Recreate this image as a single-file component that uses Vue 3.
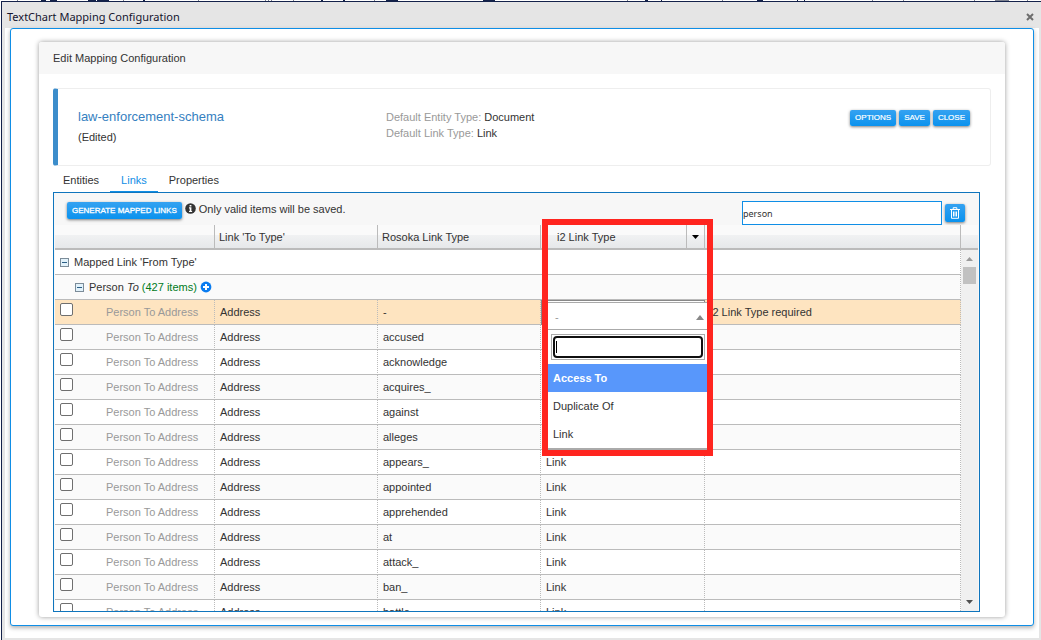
<script setup>
import { ref } from 'vue'

const filter = ref('person')
const search = ref('')
const activeTab = ref('Links')
const tabs = ['Entities', 'Links', 'Properties']
const actions = ['Options', 'Save', 'Close']
const choices = ['Access To', 'Duplicate Of', 'Link']
const rows = [
  { type: '-', link: '', note: 'i2 Link Type required' },
  { type: 'accused', link: 'Link' },
  { type: 'acknowledge', link: 'Link' },
  { type: 'acquires_', link: 'Link' },
  { type: 'against', link: 'Link' },
  { type: 'alleges', link: 'Link' },
  { type: 'appears_', link: 'Link' },
  { type: 'appointed', link: 'Link' },
  { type: 'apprehended', link: 'Link' },
  { type: 'at', link: 'Link' },
  { type: 'attack_', link: 'Link' },
  { type: 'ban_', link: 'Link' },
  { type: 'battle_', link: 'Link' }
]
</script>

<template>
  <div class="screen">
    <svg class="backdrop" height="1" aria-hidden="true">
      <path d="M40 .5h5M49 .5h7M87 .5h8M96 .5h12M142 .5h2M320 .5h2M342 .5h2M385 .5h12M482 .5h12M644 .5h3M660 .5h1M756 .5h6M796 .5h1M803 .5h1" />
      <path class="thin" d="M16 .5h1M122 .5h1M197 .5h1M264 .5h1M267 .5h1M270 .5h1M292 .5h1M373 .5h1M626 .5h1M721 .5h1M871 .5h1M902 .5h1M973 .5h1M994 .5h14M1026 .5h1" />
    </svg>
    <div class="window">
      <header class="titlebar">
        <h1>TextChart Mapping Configuration</h1>
        <button class="close" type="button" aria-label="Close window">
          <svg width="8" height="8" viewBox="0 0 8 8"><path d="M1 1l6 6M7 1l-6 6" /></svg>
        </button>
      </header>
      <div class="body">
        <div class="frame">
          <main class="card">
            <h2>Edit Mapping Configuration</h2>
            <div class="content">
              <section class="summary">
                <div class="schema">
                  <h3>law-enforcement-schema</h3>
                  <p>(Edited)</p>
                </div>
                <div class="defaults">
                  <p>Default Entity Type: <b>Document</b></p>
                  <p>Default Link Type: <b>Link</b></p>
                </div>
                <div class="actions">
                  <button v-for="a in actions" :key="a" class="btn" type="button">{{ a }}</button>
                </div>
              </section>
              <nav class="tabs">
                <button v-for="t in tabs" :key="t" type="button" :class="{ active: t === activeTab }" @click="activeTab = t">{{ t }}</button>
              </nav>
              <section class="panel">
                <div class="toolbar">
                  <button class="btn generate" type="button">Generate Mapped Links</button>
                  <svg class="info" width="11" height="11" viewBox="0 0 11 11" aria-hidden="true">
                    <circle cx="5.5" cy="5.5" r="5.3" fill="#333" />
                    <path d="M4.6 1.900h1.800v1.500H4.600zM4 4.300h2.400v3.600h.7V9H4V7.900h.7V5.400H4z" fill="#fff" />
                  </svg>
                  <span>Only valid items will be saved.</span>
                  <input v-model="filter" class="filter" type="text" aria-label="Filter links" />
                  <button class="btn trash" type="button" aria-label="Clear filter">
                    <svg width="10" height="12" viewBox="0 0 10 12"><path d="M0 2.500h10M3.200 2V.7h3.600V2M1.500 3v8.300h7V3M3.500 4.500v5M5 4.500v5M6.500 4.500v5" /></svg>
                  </button>
                </div>
                <div class="grid">
                  <div class="viewport">
                    <table>
                      <colgroup>
                        <col class="c1" /><col class="c2" /><col class="c2" /><col class="c4" /><col />
                      </colgroup>
                      <thead>
                        <tr>
                          <th></th>
                          <th>Link 'To Type'</th>
                          <th>Rosoka Link Type</th>
                          <th class="sorted">
                            <div>
                              <span>i2 Link Type</span>
                              <button type="button" aria-label="Column menu"><svg width="7" height="4" viewBox="0 0 7 4"><path d="M0 0h7L3.500 4z" /></svg></button>
                            </div>
                          </th>
                          <th></th>
                        </tr>
                      </thead>
                      <tbody>
                        <tr>
                          <td class="group" colspan="5">
                            <div><i class="minus"></i><span>Mapped Link 'From Type'</span></div>
                          </td>
                        </tr>
                        <tr>
                          <td class="group nested" colspan="5">
                            <div>
                              <i class="minus"></i>
                              <span>Person <em>To</em> <span class="count">(427 items)</span></span>
                              <svg width="12" height="12" viewBox="0 0 12 12" aria-hidden="true">
                                <circle cx="6" cy="6" r="5.400" fill="#0a7cf0" />
                                <path d="M6 3v6M3 6h6" stroke="#fff" stroke-width="2" />
                              </svg>
                            </div>
                          </td>
                        </tr>
                        <tr v-for="(r, i) in rows" :key="r.type" :class="{ invalid: i === 0 }">
                          <td class="from">
                            <label><input type="checkbox" /><span>Person To Address</span></label>
                          </td>
                          <td>Address</td>
                          <td>{{ r.type }}</td>
                          <td :class="{ editing: i === 0 }">{{ r.link }}</td>
                          <td>{{ r.note }}</td>
                        </tr>
                      </tbody>
                    </table>
                  </div>
                  <div class="scroll" aria-hidden="true">
                    <div class="corner"></div>
                    <div class="track">
                      <svg class="up" width="7" height="4" viewBox="0 0 7 4"><path d="M0 4h7L3.500 0z" /></svg>
                      <div class="thumb"></div>
                      <svg class="down" width="7" height="4" viewBox="0 0 7 4"><path d="M0 0h7L3.500 4z" /></svg>
                    </div>
                  </div>
                </div>
                <div class="highlight">
                  <div class="dropdown">
                    <button class="current" type="button">
                      <span>-</span>
                      <svg width="8" height="5" viewBox="0 0 8 5"><path d="M0 5h8L4 0z" /></svg>
                    </button>
                    <div class="search"><input v-model="search" type="text" aria-label="Search link types" autofocus /><i class="caret"></i></div>
                    <ul role="listbox" aria-label="Link types">
                      <li v-for="(c, i) in choices" :key="c" role="option" :aria-selected="i === 0" :class="{ on: i === 0 }">{{ c }}</li>
                    </ul>
                  </div>
                </div>
              </section>
            </div>
          </main>
        </div>
      </div>
    </div>
  </div>
</template>

<style>
body { background: #fff; overflow: hidden; }
</style>

<style scoped>
* { box-sizing: border-box; margin: 0; padding: 0; }
.screen {
  display: flex; flex-direction: column; height: 100vh; padding-left: 1px;
  font: 11px/16px "Liberation Sans", Arial, sans-serif; color: #333;
}
button, input { font: inherit; color: inherit; border: 0; background: none; }
.backdrop { display: block; width: 100%; flex: none; }
.backdrop path { stroke: #14224a; stroke-width: 1; }
.backdrop .thin { stroke: #7d8290; }
.window {
  flex: 1; min-height: 0; display: flex; flex-direction: column;
  border-top: 1px solid #14224a; border-left: 1px solid #14224a; background: #e5e5e5;
}
.titlebar { display: flex; align-items: center; justify-content: space-between; height: 26px; padding: 3px 6px 0 5px; }
.titlebar h1 { font: 11px/18px "Noto Sans", sans-serif; color: #14142e; }
.close { width: 10px; height: 10px; display: flex; align-items: center; justify-content: center; }
.close path { stroke: #6d6d6d; stroke-width: 2; }
.body { flex: 1; min-height: 0; display: flex; margin: 0 2px 2px 3px; padding: 0 5px 12px; background: #fff; }
.frame {
  flex: 1; min-width: 0; display: flex; padding: 13px 28px 8px; border: 1px solid #0f8ee6; border-radius: 3px;
  box-shadow: 0 2px 4px rgba(0, 0, 0, .3); background: #fff;
}
.card { flex: 1; min-width: 0; display: flex; flex-direction: column; border-radius: 3px; box-shadow: 0 0 5px rgba(0, 0, 0, .4); }
.card h2 { font-size: 11px; line-height: 32px; font-weight: 400; padding-left: 14px; background: #f7f7f7; border-radius: 3px 3px 0 0; }
.content { flex: 1; min-height: 0; display: flex; flex-direction: column; padding: 14px 14px 5px; }
.summary {
  flex: none; display: flex; height: 78px; padding: 20px 20px 0;
  border: 1px solid #eee; border-left: 5px solid #3c8dcb; border-radius: 3px;
}
.schema { width: 308px; }
.schema h3 { font-size: 13px; line-height: 16px; font-weight: 400; color: #3580bf; }
.schema p { margin-top: 4px; }
.defaults { flex: 1; color: #999; }
.defaults b { font-weight: 400; color: #333; }
.actions { display: flex; gap: 3px; align-items: flex-start; padding-top: 1px; }
.btn {
  height: 16px; padding: 0 5px; border-radius: 2px; font-size: 8px; line-height: 14px; color: #fff; text-transform: uppercase;
  background: linear-gradient(#35a2f1, #0a92ee); box-shadow: 0 1px 3px rgba(0, 0, 0, .5);
}
.actions .btn { -webkit-text-stroke: 0.2px #fff; }
.tabs { flex: none; display: flex; height: 26px; }
.tabs button { padding: 3px 11px 0; border-bottom: 1px solid transparent; }
.tabs button:first-child { padding-left: 10px; }
.tabs .active { color: #0f8ee6; border-bottom-color: #0f8ee6; }
.panel {
  position: relative; flex: 1; min-height: 0; margin-right: 11px; display: flex; flex-direction: column;
  border: 1px solid #0f75bd; background: #f7f7f7;
}
.toolbar { flex: none; display: flex; align-items: flex-start; height: 32px; padding: 8px 14px 0 13px; }
.generate { height: 17px; margin-top: 1px; -webkit-text-stroke: 0.3px #fff; }
.info { margin: 2px 3px 0 3px; }
.filter {
  width: 200px; height: 24px; margin-left: auto; border: 1px solid #0f8ee6; background: #fff;
  font: 9px/20px "Noto Sans", sans-serif; outline: 0;
}
.trash { width: 20px; height: 18px; margin: 3px 0 0 3px; display: flex; justify-content: center; align-items: center; }
.trash path { fill: none; stroke: #fff; stroke-width: 1; }
.grid { flex: 1; min-height: 0; display: flex; margin: 0 1px; }
.viewport { flex: 1; min-width: 0; overflow: hidden; background: #fff; }
table { width: 100%; table-layout: fixed; border-collapse: separate; border-spacing: 0; }
.c1 { width: 160px; }
.c2 { width: 163px; }
.c4 { width: 164px; }
th, .corner { height: 25px; border-bottom: 2px solid #bbb; background: linear-gradient(#fafafa 0 42%, #f1f2f3 42%, #e6e8ea); }
th { font-weight: 400; text-align: left; padding: 0 4px; border-right: 1px solid #bbb; }
th.sorted { padding: 0; }
.sorted div { display: flex; height: 23px; align-items: center; padding-left: 16px; }
.sorted span { flex: 1; }
.sorted button { width: 18px; height: 23px; border-left: 1px solid #bbb; display: flex; align-items: center; justify-content: center; }
td {
  height: 25px; padding: 0 5px; border-right: 1px dotted #bbb; border-bottom: 1px solid #bbb;
  white-space: nowrap;
}
tbody tr:nth-child(even) { background: #fafafa; }
tbody tr.invalid { background: #fee4c0; }
.group div { display: flex; align-items: center; gap: 5px; }
.nested div { padding-left: 15px; }
.nested svg { margin-left: -2px; }
.count { color: #007a1a; }
.minus { width: 9px; height: 9px; border: 1px solid #7c8c99; background: linear-gradient(#2c5f86, #2c5f86) center / 5px 1px no-repeat #e2f2fb; }
.from label { display: flex; align-items: center; color: #999; }
.from input {
  appearance: none; width: 13px; height: 13px; margin-bottom: 5px; border: 1px solid #6f6f6f; border-radius: 2px; background: #fff;
}
.from span { margin-left: 33px; }
.editing { border: 1px solid #888; border-left-width: 2px; background: #fff; }
.scroll { width: 17px; display: flex; flex-direction: column; }
.track { flex: 1; display: flex; flex-direction: column; align-items: center; padding: 7px 0 7px; background: #f0f0f0; }
.up { fill: #9a9a9a; }
.thumb { width: 13px; height: 17px; margin-top: 6px; background: #c1c1c1; }
.down { margin-top: auto; fill: #505050; }
.highlight { position: absolute; left: 488px; top: 26px; width: 171px; height: 237px; border: 6px solid #ff251f; }
.dropdown { margin-top: 77px; background: #fff; border: 1px solid #aaa; border-width: 1px 0 2px; }
.current { display: flex; align-items: center; justify-content: space-between; width: 100%; height: 27px; padding: 2px 3px 0 7px; border-bottom: 1px solid #aaa; color: #999; }
.current svg { fill: #888; }
.search { position: relative; margin: 4px 2px 4px 3px; border: 1px solid #aaa; padding: 1px; }
.search input { display: block; width: 100%; height: 22px; border: 2px solid #101010; border-radius: 4px; outline: 0; padding-left: 3px; caret-color: transparent; }
.caret { position: absolute; left: 4px; top: 6px; width: 1px; height: 12px; background: #000; }
ul { list-style: none; }
li { line-height: 28px; padding-left: 5px; }
.on { background: #5897fb; color: #fff; font-weight: 700; }
</style>
